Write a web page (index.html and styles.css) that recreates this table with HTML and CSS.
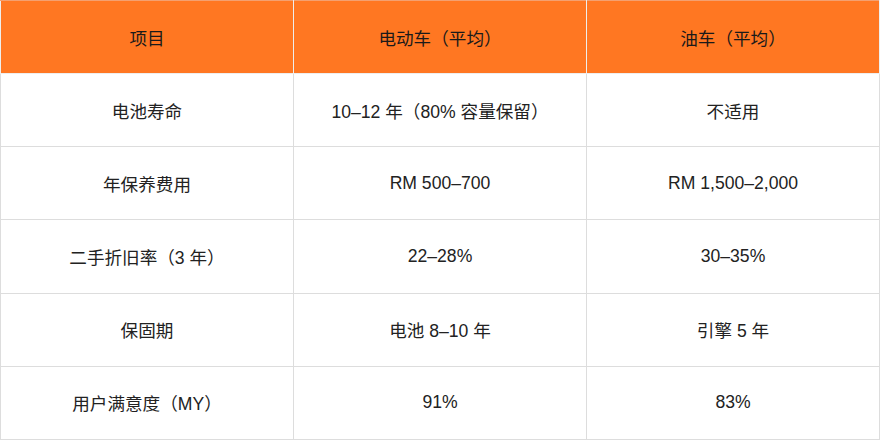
FILE: index.html
```html
<!DOCTYPE html>
<html lang="zh">
<head>
<meta charset="utf-8">
<link rel="stylesheet" href="styles.css">
</head>
<body>
<table class="cmp">
  <thead>
    <tr><th>项目</th><th>电动车（平均）</th><th>油车（平均）</th></tr>
  </thead>
  <tbody>
    <tr><td>电池寿命</td><td>10–12 年（80% 容量保留）</td><td>不适用</td></tr>
    <tr><td>年保养费用</td><td>RM 500–700</td><td>RM 1,500–2,000</td></tr>
    <tr><td>二手折旧率（3 年）</td><td>22–28%</td><td>30–35%</td></tr>
    <tr><td>保固期</td><td>电池 8–10 年</td><td>引擎 5 年</td></tr>
    <tr><td>用户满意度（MY）</td><td>91%</td><td>83%</td></tr>
  </tbody>
</table>
</body>
</html>
```
FILE: styles.css
```css
html, body { margin: 0; padding: 0; background: #fff; }
.cmp {
  width: 880px;
  height: 440px;
  border-collapse: collapse;
  table-layout: fixed;
  font-family: "Liberation Sans", "Noto Sans CJK SC", sans-serif;
  font-size: 17.6px;
  color: #222;
}
.cmp th, .cmp td {
  border: 1px solid #ddd;
  text-align: center;
  vertical-align: middle;
  padding: 0 8px;
  font-weight: normal;
}
.cmp th {
  background: #ff7722;
  color: #1a1a1a;
  border-color: #f4a070 #eeeeee #eeeeee #eeeeee;
}
.cmp tr { height: 73px; }
```
